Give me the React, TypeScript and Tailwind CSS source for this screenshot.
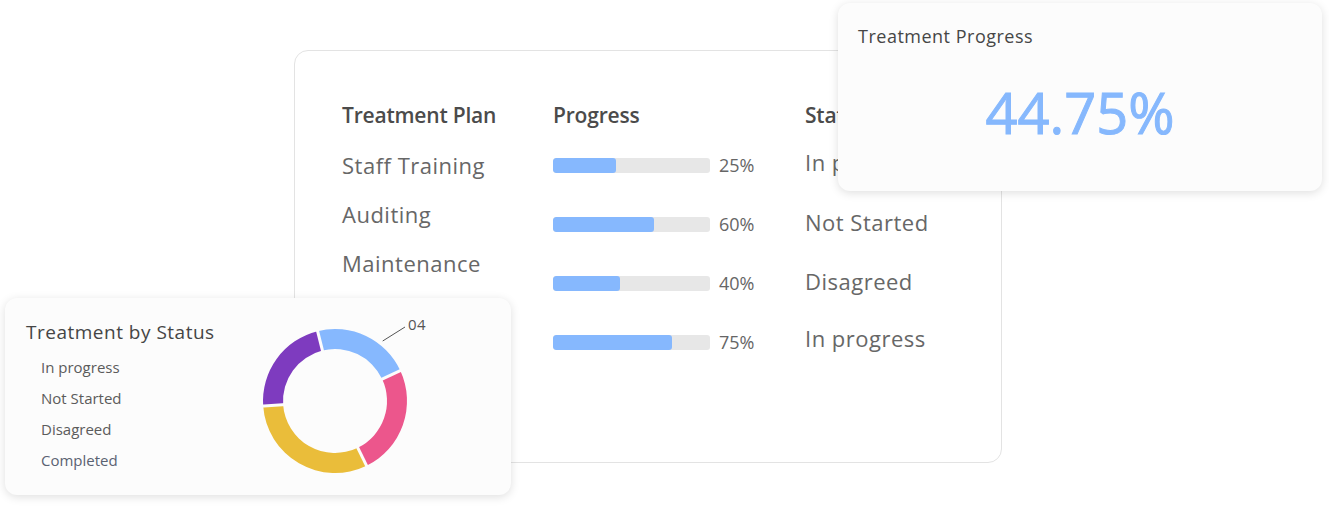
import React from "react";

const plans = ["Staff Training", "Auditing", "Maintenance"];

const bars = [
  { pct: "25%", fill: 63 },
  { pct: "60%", fill: 101 },
  { pct: "40%", fill: 67 },
  { pct: "75%", fill: 119 },
];

const statuses = [
  { label: "In progress", h: "h-[59px]" },
  { label: "Not Started", h: "h-[60px]" },
  { label: "Disagreed", h: "h-[58px]" },
  { label: "In progress", h: "h-[56px]" },
];

const legend = [
  { label: "In progress", color: "text-[#5b5b5b]" },
  { label: "Not Started", color: "text-[#5b5b5b]" },
  { label: "Disagreed", color: "text-[#5b5b5b]" },
  { label: "Completed", color: "text-[#5a6272]" },
];

const segments = [
  { from: -14, to: 65, color: "#86b8fe" },
  { from: 65, to: 154, color: "#ec568c" },
  { from: 154, to: 266, color: "#eabd3a" },
  { from: 266, to: 346, color: "#7e3bbf" },
];

const CX = 80;
const CY = 90;
const RO = 72;
const RI = 52;

function xy(r: number, deg: number): [number, number] {
  const a = (deg * Math.PI) / 180;
  return [CX + r * Math.sin(a), CY - r * Math.cos(a)];
}

function pt(r: number, deg: number) {
  const [x, y] = xy(r, deg);
  return `${x.toFixed(2)} ${y.toFixed(2)}`;
}

function sector(from: number, to: number) {
  const large = to - from > 180 ? 1 : 0;
  return `M ${pt(RO, from)} A ${RO} ${RO} 0 ${large} 1 ${pt(RO, to)} L ${pt(RI, to)} A ${RI} ${RI} 0 ${large} 0 ${pt(RI, from)} Z`;
}

function Donut() {
  return (
    <svg width="180" height="175" viewBox="0 0 180 175" className="-mt-2 shrink-0">
      {segments.map((s) => (
        <path key={s.from} d={sector(s.from, s.to)} fill={s.color} />
      ))}
      {segments.map((s) => {
        const [x1, y1] = xy(RI - 3, s.from);
        const [x2, y2] = xy(RO + 3, s.from);
        return <line key={`g${s.from}`} x1={x1} y1={y1} x2={x2} y2={y2} stroke="#fcfcfc" strokeWidth="3" />;
      })}
      <line x1="127.7" y1="30" x2="150" y2="16" stroke="#555" strokeWidth="1" />
      <text x="153" y="19" fontSize="15" fill="#555" fontFamily="'Open Sans', sans-serif" letterSpacing="0.5">
        04
      </text>
    </svg>
  );
}

export default function App() {
  return (
    <div className="relative w-[1329px] h-[508px] bg-white overflow-hidden font-['Open_Sans',sans-serif]">
      <div className="pt-[50px] pl-[294px]">
        <div className="w-[708px] h-[413px] rounded-[14px] border border-[#e3e3e3] bg-white pl-[47px] pt-[51px] flex">
          <div className="w-[211px] flex flex-col">
            <div className="h-[28px] flex items-center text-[21px] font-semibold text-[#4b4b4b] tracking-[-0.2px]">Treatment Plan</div>
            <div className="mt-[11px] flex flex-col">
              {plans.map((p) => (
                <div key={p} className="h-[49px] flex items-center text-[22px] tracking-[0.5px] text-[#676767]">
                  {p}
                </div>
              ))}
            </div>
          </div>
          <div className="w-[252px] flex flex-col">
            <div className="h-[28px] flex items-center text-[21px] font-semibold text-[#4b4b4b] tracking-[-0.2px]">Progress</div>
            <div className="mt-[6px] flex flex-col">
              {bars.map((b) => (
                <div key={b.pct} className="h-[59px] flex items-center">
                  <div className="w-[157px] h-[15px] rounded-[3px] bg-[#e7e7e7] overflow-hidden">
                    <div className="h-full rounded-[3px] bg-[#86b8fe]" style={{ width: b.fill }} />
                  </div>
                  <span className="ml-[9px] text-[18px] text-[#666]">{b.pct}</span>
                </div>
              ))}
            </div>
          </div>
          <div className="flex flex-col">
            <div className="h-[28px] flex items-center text-[21px] font-semibold text-[#4b4b4b] tracking-[-0.2px]">Status</div>
            <div className="mt-[3px] flex flex-col">
              {statuses.map((s, i) => (
                <div key={i} className={`${s.h} flex items-center text-[22px] tracking-[0.5px] text-[#676767]`}>
                  {s.label}
                </div>
              ))}
            </div>
          </div>
        </div>
      </div>

      <div className="absolute left-[838px] top-[3px] w-[484px] h-[188px] rounded-[12px] bg-[#fcfcfc] shadow-[0_2px_10px_rgba(0,0,0,0.13)] pt-[21px] px-[20px]">
        <div className="h-[24px] flex items-center text-[18px] tracking-[0.5px] text-[#464646]">Treatment Progress</div>
        <div className="mt-[33px] h-[62px] flex items-center justify-center text-[56px] text-[#86b8fd] [-webkit-text-stroke:1px_#86b8fd]">44.75%</div>
      </div>

      <div className="absolute left-[5px] top-[298px] w-[506px] h-[197px] rounded-[12px] bg-[#fcfcfc] shadow-[0_2px_10px_rgba(0,0,0,0.13)] pt-[21px] pl-[21px] flex">
        <div className="w-[229px] flex flex-col">
          <div className="h-[26px] flex items-center text-[19px] tracking-[0.5px] text-[#454545]">Treatment by Status</div>
          <div className="mt-[7px] pl-[15px] flex flex-col">
            {legend.map((l) => (
              <div key={l.label} className={`h-[31px] flex items-center text-[15px] ${l.color}`}>
                {l.label}
              </div>
            ))}
          </div>
        </div>
        <Donut />
      </div>
    </div>
  );
}
